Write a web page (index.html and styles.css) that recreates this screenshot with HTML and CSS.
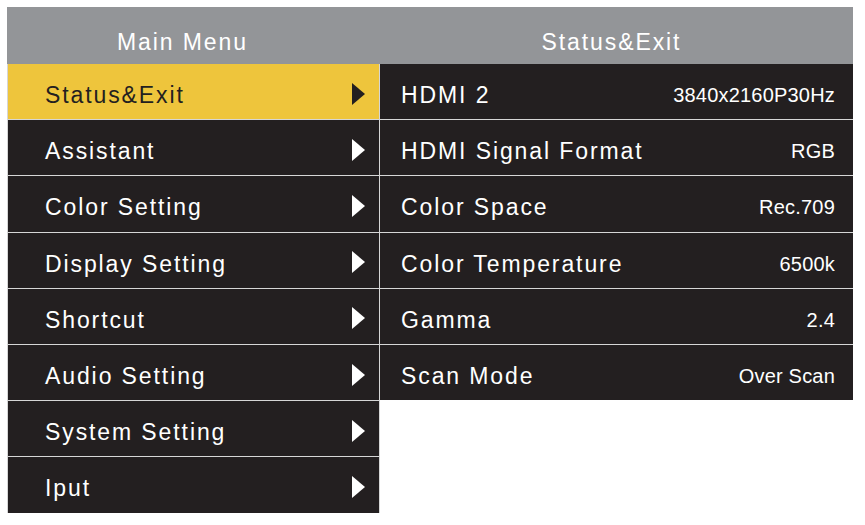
FILE: index.html
```html
<!DOCTYPE html>
<html>
<head>
<meta charset="utf-8">
<link rel="stylesheet" href="styles.css">
</head>
<body>
<div class="screen">
  <div class="head">
    <div class="head-cell head-left">Main Menu</div>
    <div class="head-cell head-right">Status&amp;Exit</div>
  </div>
  <div class="panels">
    <div class="menu">
      <div class="menu-row active"><span class="text">Status&amp;Exit</span><i class="arrow"></i></div>
      <div class="menu-row"><span class="text">Assistant</span><i class="arrow"></i></div>
      <div class="menu-row"><span class="text">Color Setting</span><i class="arrow"></i></div>
      <div class="menu-row"><span class="text">Display Setting</span><i class="arrow"></i></div>
      <div class="menu-row"><span class="text">Shortcut</span><i class="arrow"></i></div>
      <div class="menu-row"><span class="text">Audio Setting</span><i class="arrow"></i></div>
      <div class="menu-row"><span class="text">System Setting</span><i class="arrow"></i></div>
      <div class="menu-row"><span class="text">Iput</span><i class="arrow"></i></div>
    </div>
    <div class="status">
      <div class="stat-row"><span class="label">HDMI 2</span><span class="value">3840x2160P30Hz</span></div>
      <div class="stat-row"><span class="label">HDMI Signal Format</span><span class="value">RGB</span></div>
      <div class="stat-row"><span class="label">Color Space</span><span class="value">Rec.709</span></div>
      <div class="stat-row"><span class="label">Color Temperature</span><span class="value">6500k</span></div>
      <div class="stat-row"><span class="label">Gamma</span><span class="value">2.4</span></div>
      <div class="stat-row"><span class="label">Scan Mode</span><span class="value">Over Scan</span></div>
    </div>
  </div>
</div>
</body>
</html>
```

FILE: styles.css
```css
html, body {
  margin: 0;
  padding: 0;
  background: #ffffff;
}

body {
  font-family: "Liberation Sans", Arial, sans-serif;
}

.screen {
  margin: 7px 0 0 7px;
  width: 846px;
}

.head {
  display: grid;
  grid-template-columns: 373px 473px;
  height: 57px;
  background: #939598;
  color: #ffffff;
  font-size: 23px;
  letter-spacing: 1.9px;
}

.head-cell {
  display: flex;
  align-items: center;
  justify-content: center;
  padding-top: 14px;
  box-sizing: border-box;
}

.head-left {
  padding-right: 22px;
}

.head-right {
  padding-right: 10px;
}

.panels {
  display: grid;
  grid-template-columns: 373px 473px;
  align-items: start;
}

.menu {
  display: flex;
  flex-direction: column;
  gap: 1px;
  padding-left: 1px;
  background: #d6d6d6;
  border-right: 1px solid #d6d6d6;
}

.menu-row {
  height: 55.2px;
  background: #231f20;
  color: #ffffff;
  display: flex;
  align-items: center;
  justify-content: space-between;
  padding: 0 14px 0 37px;
  box-sizing: border-box;
  font-size: 23px;
  letter-spacing: 1.9px;
}

.text {
  padding-top: 8px;
}

.menu-row.active {
  background: #eec53c;
  color: #231f20;
}

.arrow {
  display: block;
  width: 0;
  height: 0;
  border-top: 11px solid transparent;
  border-bottom: 11px solid transparent;
  border-left: 13px solid #ffffff;
  margin-top: 4px;
}

.menu-row.active .arrow {
  border-left-color: #231f20;
}

.status {
  display: flex;
  flex-direction: column;
  gap: 1px;
  background: #d6d6d6;
}

.stat-row {
  height: 55.2px;
  background: #231f20;
  color: #ffffff;
  display: flex;
  align-items: center;
  justify-content: space-between;
  padding: 0 18px 0 21px;
  box-sizing: border-box;
}

.label {
  font-size: 23px;
  letter-spacing: 1.9px;
  padding-top: 8px;
}

.value {
  font-size: 20px;
  letter-spacing: 0.2px;
  padding-top: 8px;
}
```
